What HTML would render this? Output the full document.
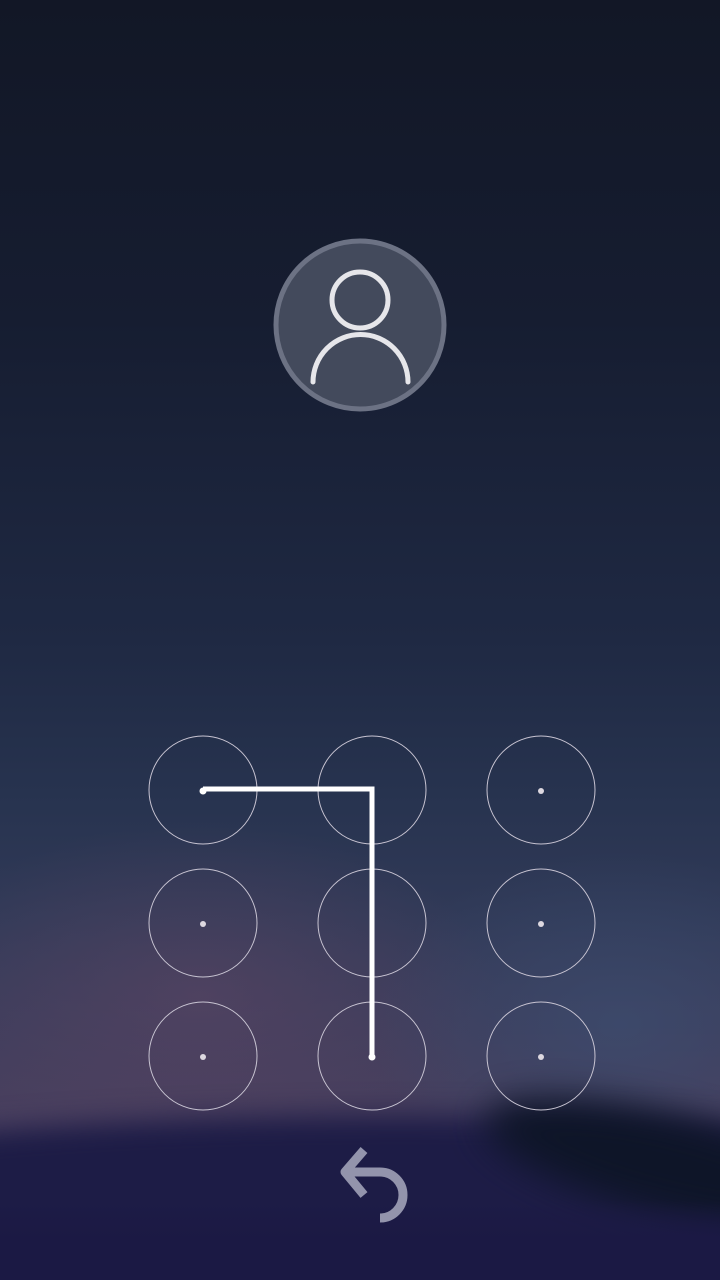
<!DOCTYPE html>
<html><head><meta charset="utf-8"><style>
html,body{margin:0;padding:0;width:720px;height:1280px;overflow:hidden}
#w{width:720px;height:1280px;position:relative;overflow:hidden;clip-path:inset(0);
background:linear-gradient(180deg,#121726 0%,#161d31 25%,#1f2943 50%,#27334f 62%,#313a58 72%,#3d3d5c 80%,#473f5e 86%,#4d4262 88%);}
.glow{position:absolute;left:-100px;top:820px;width:600px;height:350px;border-radius:50%;background:radial-gradient(ellipse at center,rgba(95,70,100,.55),rgba(95,70,100,0) 70%)}
.glowr{position:absolute;right:-150px;top:850px;width:500px;height:350px;border-radius:50%;background:radial-gradient(ellipse at center,rgba(60,80,115,.6),rgba(60,80,115,0) 70%)}
.hill{position:absolute;left:-300px;top:1115px;width:1400px;height:160px;border-radius:50% 50% 0 0;background:#1d1c46;filter:blur(14px)}
.dark{position:absolute;left:480px;top:1115px;width:380px;height:100px;border-radius:50%;background:#0e1528;filter:blur(18px);transform:rotate(14deg)}
.bot{position:absolute;left:0;top:1200px;width:720px;height:80px;background:linear-gradient(180deg,rgba(27,25,68,0),#1b1944 50%)}
</style></head><body><div id="w">
<div class="glow"></div><div class="glowr"></div>
<div class="hill"></div><div class="dark"></div><div class="bot"></div>
<svg width="720" height="1280" style="position:absolute;left:0;top:0">
<circle cx="360" cy="325" r="84" fill="#434a5c" stroke="#6c7284" stroke-width="5"/>
<circle cx="360" cy="300" r="28" fill="none" stroke="#e6e6ea" stroke-width="5"/>
<path d="M313 382 A47 47 0 0 1 408 382" fill="none" stroke="#e6e6ea" stroke-width="5" stroke-linecap="round"/>
<g fill="none" stroke="#c8c4d2" stroke-width="1">
<circle cx="203" cy="790" r="54"/><circle cx="372" cy="790" r="54"/><circle cx="541" cy="790" r="54"/>
<circle cx="203" cy="923" r="54"/><circle cx="372" cy="923" r="54"/><circle cx="541" cy="923" r="54"/>
<circle cx="203" cy="1056" r="54"/><circle cx="372" cy="1056" r="54"/><circle cx="541" cy="1056" r="54"/>
</g>
<g fill="#ddd8e0">
<circle cx="541" cy="791" r="3"/><circle cx="203" cy="924" r="3"/><circle cx="541" cy="924" r="3"/>
<circle cx="203" cy="1057" r="3"/><circle cx="541" cy="1057" r="3"/>
</g>
<path d="M203 789 H372 V1056" fill="none" stroke="#fff" stroke-width="5"/>
<circle cx="203" cy="791" r="3.5" fill="#fff"/><circle cx="372" cy="1057" r="3.5" fill="#fff"/>
<path d="M364 1150 L345 1172 L364 1195 M345 1172 H380 A23 23 0 0 1 380 1218" fill="none" stroke="#9394ac" stroke-width="9" stroke-linejoin="round"/>
</svg>
</div></body></html>
